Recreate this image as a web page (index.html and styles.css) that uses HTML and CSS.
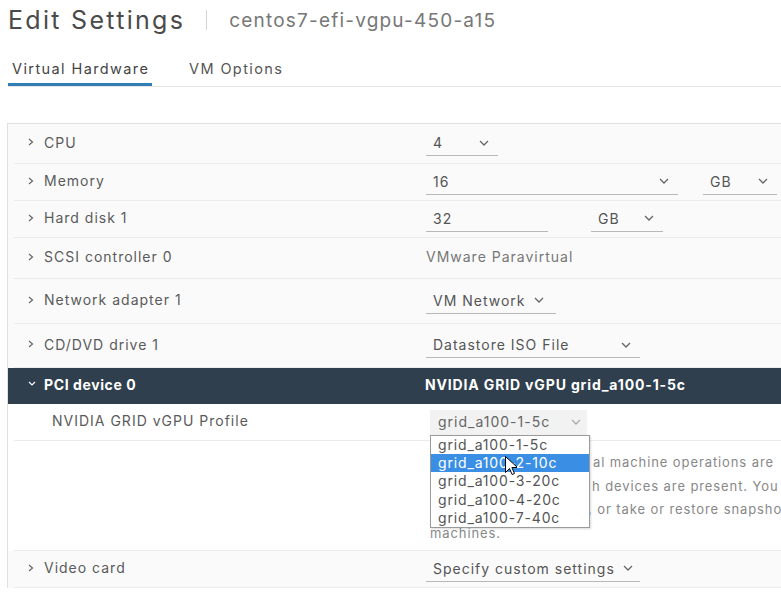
FILE: index.html
```html
<!DOCTYPE html>
<html>
<head>
<meta charset="utf-8">
<link rel="stylesheet" href="styles.css">
</head>
<body>
<div class="page">
  <header class="title-bar">
    <h1 class="title">Edit Settings</h1>
    <span class="sep"></span>
    <span class="subtitle">centos7-efi-vgpu-450-a15</span>
  </header>
  <nav class="tabs">
    <span class="tab active">Virtual Hardware</span>
    <span class="tab">VM Options</span>
  </nav>

  <div class="hw">
    <div class="row h40">
      <div class="label"><svg class="chev" viewBox="0 0 6 8"><path d="M1 1l3.5 3L1 7"/></svg>CPU</div>
      <div class="value"><span class="sel w72">4<svg class="down" viewBox="0 0 10 6"><path d="M1 1l4 4 4-4"/></svg></span></div>
    </div>
    <div class="row h37">
      <div class="label"><svg class="chev" viewBox="0 0 6 8"><path d="M1 1l3.5 3L1 7"/></svg>Memory</div>
      <div class="value gap25"><span class="sel w252">16<svg class="down" viewBox="0 0 10 6"><path d="M1 1l4 4 4-4"/></svg></span><span class="sel w74">GB<svg class="down" viewBox="0 0 10 6"><path d="M1 1l4 4 4-4"/></svg></span></div>
    </div>
    <div class="row h37">
      <div class="label"><svg class="chev" viewBox="0 0 6 8"><path d="M1 1l3.5 3L1 7"/></svg>Hard disk 1</div>
      <div class="value gap43"><span class="sel w122">32</span><span class="sel w72">GB<svg class="down" viewBox="0 0 10 6"><path d="M1 1l4 4 4-4"/></svg></span></div>
    </div>
    <div class="row h41">
      <div class="label"><svg class="chev" viewBox="0 0 6 8"><path d="M1 1l3.5 3L1 7"/></svg>SCSI controller 0</div>
      <div class="value"><span class="plain">VMware Paravirtual</span></div>
    </div>
    <div class="row h45">
      <div class="label"><svg class="chev" viewBox="0 0 6 8"><path d="M1 1l3.5 3L1 7"/></svg>Network adapter 1</div>
      <div class="value"><span class="sel w130 tight">VM Network<svg class="down" viewBox="0 0 10 6"><path d="M1 1l4 4 4-4"/></svg></span></div>
    </div>
    <div class="row h44">
      <div class="label"><svg class="chev" viewBox="0 0 6 8"><path d="M1 1l3.5 3L1 7"/></svg>CD/DVD drive 1</div>
      <div class="value"><span class="sel w214">Datastore ISO File<svg class="down" viewBox="0 0 10 6"><path d="M1 1l4 4 4-4"/></svg></span></div>
    </div>
    <div class="row h36 dark">
      <div class="label"><svg class="chev" viewBox="0 0 8 6"><path d="M1 1l3 3 3-3"/></svg>PCI device 0</div>
      <div class="value head-val">NVIDIA GRID vGPU grid_a100-1-5c</div>
    </div>
    <div class="row h37 white">
      <div class="label sub">NVIDIA GRID vGPU Profile</div>
      <div class="value">
        <div class="combo">
          <span class="combo-box">grid_a100-1-5c<svg class="down light" viewBox="0 0 10 6"><path d="M1 1l4 4 4-4"/></svg></span>
          <ul class="list">
            <li>grid_a100-1-5c</li>
            <li class="hl">grid_a100-2-10c</li>
            <li>grid_a100-3-20c</li>
            <li>grid_a100-4-20c</li>
            <li>grid_a100-7-40c</li>
          </ul>
          <svg class="cursor" viewBox="0 0 12 19"><path d="M0.5 0.5v16l4-4 2.6 6 2.4-1-2.6-6h5.6z" fill="#fff" stroke="#000" stroke-width="1"/></svg>
        </div>
      </div>
    </div>
    <div class="row desc white">
      <div class="label"></div>
      <div class="value note">
        <div class="line"><span class="cov">Note: Some virtu</span><span class="gap7"></span>al machine operations are</div>
        <div class="line"><span class="cov">unavailable when PCI passthroug</span><span class="gap6"></span>h devices are present. You</div>
        <div class="line"><span class="cov">cannot suspend, migrate with vMotion</span><span class="gap2"></span>, or take or restore snapshots of virtual</div>
        <div class="line">machines.</div>
      </div>
    </div>
    <div class="row h37 last">
      <div class="label"><svg class="chev" viewBox="0 0 6 8"><path d="M1 1l3.5 3L1 7"/></svg>Video card</div>
      <div class="value"><span class="sel w214 tight">Specify custom settings<svg class="down" viewBox="0 0 10 6"><path d="M1 1l4 4 4-4"/></svg></span></div>
    </div>
  </div>
</div>
</body>
</html>
```
FILE: styles.css
```css
* { box-sizing: border-box; }
html, body { margin: 0; padding: 0; background: #fff; overflow: hidden; }
body { font-family: Inter, "DejaVu Sans", sans-serif; color: #565656; width: 781px; height: 593px; }

.title-bar { display: flex; align-items: center; padding: 0 0 0 8px; height: 40px; }
.title { margin: 0; font-size: 25px; font-weight: 400; color: #4a4a4a; letter-spacing: 2.3px; }
.sep { width: 1px; height: 20px; background: #d4d4d4; margin: 0 22px 0 21px; }
.subtitle { font-size: 19px; color: #777; letter-spacing: 1.2px; }

.tabs { display: flex; margin: 16px 0 0 8px; border-bottom: 1px solid #e6e6e6; height: 31px; }
.tab { font-size: 14.5px; color: #555; padding: 4px 4px 0 4px; margin-right: 33px; letter-spacing: 1.4px; }
.tab.active { border-bottom: 3px solid #2f7db3; color: #444; width: 144px; white-space: nowrap; }

.hw { margin: 36px 0 0 7px; border-left: 1px solid #e0e0e0; border-top: 1px solid #e0e0e0; background: #fafafa; }
.row { display: grid; grid-template-columns: 418px 1fr; align-items: center; position: relative; }
.row::after { content: ""; position: absolute; left: 6px; right: 0; bottom: 0; height: 1px; background: #ebebeb; }
.h36 { height: 36px; } .h37 { height: 37px; } .h40 { height: 40px; } .h41 { height: 41px; } .h44 { height: 44px; } .h45 { height: 45px; }
.white { background: #fff; }
.desc { height: 110px; align-items: start; }
.label { display: flex; align-items: center; font-size: 14px; padding: 0 0 4px 20px; letter-spacing: 1px; color: #5a5a5a; white-space: nowrap; }
.label.sub { padding-left: 44px; }
.chev { width: 6px; height: 8px; margin-right: 10px; fill: none; stroke: #666; stroke-width: 1.2; }
.dark { background: #2f3f4e; }
.dark::after { display: none; }
.dark .label { color: #fff; font-weight: 700; letter-spacing: 0.6px; }
.dark .chev { width: 8px; height: 6px; stroke: #fff; margin-right: 8px; }
.dark .head-val { color: #fff; font-weight: 700; font-size: 14px; margin-left: -1px; letter-spacing: 0.85px; padding-bottom: 4px; }

.value { display: flex; align-items: center; font-size: 14px; color: #555; letter-spacing: 1px; white-space: nowrap; }
.gap25 { gap: 25px; } .gap43 { gap: 43px; }
.sel { display: inline-flex; flex-shrink: 0; align-items: center; justify-content: space-between; height: 24px; padding: 0 9px 2px 7px; border-bottom: 1px solid #b8b8b8; white-space: nowrap; }
.sel.tight { justify-content: flex-start; gap: 8px; }
.w72 { width: 72px; } .w74 { width: 74px; } .w122 { width: 122px; } .w130 { width: 130px; } .w214 { width: 214px; } .w252 { width: 252px; }
.down { width: 10px; height: 6px; flex-shrink: 0; fill: none; stroke: #666; stroke-width: 1.3; }
.down.light { stroke: #aaa; }
.plain { padding: 0 0 4px 0; color: #777; }

.combo { position: relative; margin-left: 4px; }
.combo-box { display: flex; align-items: center; justify-content: space-between; width: 157px; height: 25px; padding: 0 6px 2px 8px; background: #f2f2f2; color: #666; white-space: nowrap; }
.list { position: absolute; top: 25px; left: 0; width: 160px; margin: 0; padding: 0; list-style: none; background: #fff; border: 1px solid #9a9a9a; z-index: 2; box-shadow: 1px 1px 2px rgba(0,0,0,0.15); }
.list li { height: 18.2px; line-height: 17px; padding-left: 7px; color: #555; font-size: 14px; letter-spacing: 0.85px; white-space: nowrap; }
.list li.hl { background: #3a8fe5; color: #fff; }
.cursor { position: absolute; left: 75px; top: 46px; width: 12px; height: 19px; z-index: 3; }

.note { display: block; padding-top: 10px; color: #888; white-space: nowrap; overflow: hidden; margin-left: 4px; font-size: 13px; letter-spacing: 0.9px; }
.line { height: 23.5px; line-height: 23.5px; }
.cov { display: inline-block; width: 156px; overflow: hidden; vertical-align: top; white-space: nowrap; }
.gap7 { display: inline-block; width: 7px; } .gap6 { display: inline-block; width: 6px; } .gap2 { display: inline-block; width: 2px; }
.last { background: #fafafa; }
```
